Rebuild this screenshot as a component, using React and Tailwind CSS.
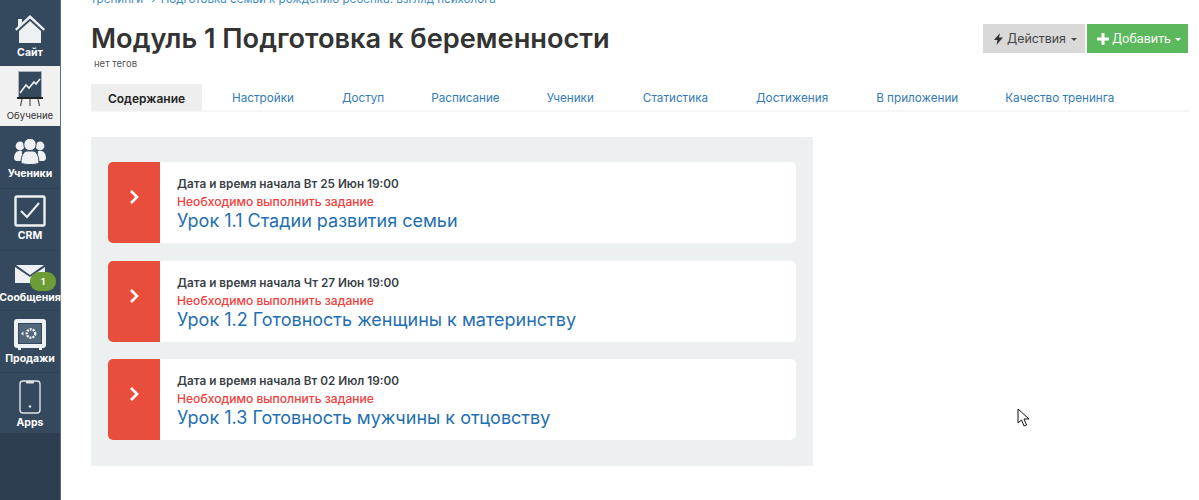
const F = { fontFamily: 'Inter, "Noto Sans", sans-serif' };

function Home() {
  return (
    <svg width="32" height="30" viewBox="0 0 32 30">
      <path d="M4 5h4v4L4 13z" fill="#eef1f3" />
      <path d="M16 1 1 15l1.5 1.8L16 4.5l13.5 12.3L31 15z" fill="#eef1f3" />
      <path d="M16 7 5 17v12h22V17z" fill="#eef1f3" />
    </svg>
  );
}
function Board() {
  return (
    <svg width="26" height="36" viewBox="0 0 26 36">
      <rect x="1.5" y="0.5" width="23" height="26" fill="#34495e" stroke="#aab4bd" strokeWidth="1" />
      <path d="M3 22 9 14l3 3 5-6 2 2 4-5" fill="none" stroke="#eef1f3" strokeWidth="1.6" />
      <rect x="0" y="26" width="26" height="2" fill="#222" />
      <path d="M5 28 3.5 35M13 28v7M21 28l1.5 7" stroke="#555" strokeWidth="1.2" />
    </svg>
  );
}
function People() {
  return (
    <svg width="32" height="27" viewBox="0 0 32 27" fill="#eef1f3">
      <circle cx="6" cy="8" r="4.4" />
      <circle cx="26" cy="8" r="4.4" />
      <path d="M0 21c0-5 2-8 5-8h3v10H2z" />
      <path d="M32 21c0-5-2-8-5-8h-3v10h6z" />
      <circle cx="16" cy="6.5" r="6.2" stroke="#34495e" strokeWidth="1" />
      <path d="M7 25c0-8 3-12 6-12h6c3 0 6 4 6 12-3 2-15 2-18 0z" stroke="#34495e" strokeWidth="1" />
    </svg>
  );
}
function Check() {
  return (
    <svg width="32" height="32" viewBox="0 0 32 32" fill="none">
      <rect x="1.5" y="1.5" width="29" height="29" rx="1.5" stroke="#eef1f3" strokeWidth="2.4" />
      <path d="m7 16 6 6L25 8" stroke="#eef1f3" strokeWidth="2" />
    </svg>
  );
}
function Mail() {
  return (
    <svg width="30" height="18" viewBox="0 0 30 18" fill="#eef1f3">
      <path d="M1 0h28L15 10z" />
      <path d="M0 2v16h30V2L15 12z" />
    </svg>
  );
}
function Safe() {
  return (
    <svg width="32" height="31" viewBox="0 0 32 31" fill="none">
      <rect x="1" y="1" width="30" height="27" rx="2" fill="#eef1f3" stroke="#eef1f3" strokeWidth="2" />
      <rect x="4.5" y="4.5" width="23" height="20" fill="#52677a" stroke="#34495e" />
      <circle cx="17" cy="14.5" r="4.2" stroke="#eef1f3" strokeWidth="2.4" strokeDasharray="2 1" />
      <path d="m7 14.5 2.5-2v4z" fill="#eef1f3" />
      <path d="M4 29h3v2H4zM25 29h3v2h-3z" fill="#eef1f3" />
    </svg>
  );
}
function Phone() {
  return (
    <svg width="22" height="34" viewBox="0 0 22 34" fill="none">
      <rect x="1" y="1" width="20" height="32" rx="3" stroke="#dfe4e8" strokeWidth="1.4" />
      <path d="M7 1h8v1.5a1 1 0 0 1-1 1H8a1 1 0 0 1-1-1z" fill="#dfe4e8" />
      <circle cx="11" cy="26.5" r="1.3" fill="#dfe4e8" />
    </svg>
  );
}

function NavItem({ h, icon, label, active, badge, bt }) {
  return (
    <div
      className={`relative flex flex-col items-center justify-end ${h} ${bt ? "border-t border-[#2f4356]" : ""} ${active ? "bg-[#f1f1f1]" : ""}`}
    >
      {icon}
      <span
        className={`mt-[2px] whitespace-nowrap leading-[13px] ${active ? "text-[9.6px] font-normal text-[#333]" : "text-[10.5px] font-bold text-white"}`}
      >
        {label}
      </span>
      {badge}
    </div>
  );
}

function Lesson({ date, title }) {
  return (
    <div className="flex h-[81px] overflow-hidden rounded-[5px] bg-white">
      <div className="flex w-[52px] shrink-0 items-center justify-center bg-[#e94e3d] pb-[11px]">
        <svg width="11" height="16" viewBox="0 0 11 16" fill="none">
          <path d="m2 2 6 6-6 6" stroke="#fff" strokeWidth="2.6" />
        </svg>
      </div>
      <div className="pl-[17px] pt-[14px]">
        <div className="text-[11.75px] font-semibold leading-[17px] text-[#3a3f47]">Дата и время начала {date}</div>
        <div className="text-[12.1px] font-medium leading-[17px] text-[#f0403c]">Необходимо выполнить задание</div>
        <div className="text-[18px] leading-[22px] text-[#1f6fb2]">{title}</div>
      </div>
    </div>
  );
}

const tabs = [
  ["Настройки", "ml-[30px]"],
  ["Доступ", "ml-[48px]"],
  ["Расписание", "ml-[47px]"],
  ["Ученики", "ml-[47px]"],
  ["Статистика", "ml-[49px]"],
  ["Достижения", "ml-[48px]"],
  ["В приложении", "ml-[48px]"],
  ["Качество тренинга", "ml-[47px]"],
];

export default function App() {
  return (
    <div className="relative flex h-[500px] w-[1199px] overflow-hidden bg-white" style={F}>
      <aside className="flex w-[61px] shrink-0 flex-col border-r border-[#5c6b78] bg-[#2c3e50]">
        <div className="bg-[#34495e]">
          <NavItem h="h-[66px] pb-[7px]" icon={<Home />} label="Сайт" />
          <NavItem h="h-[60px] pb-[4px]" icon={<Board />} label="Обучение" active />
          <NavItem h="h-[62px] pb-[8px]" icon={<People />} label="Ученики" />
          <NavItem h="h-[62px] pb-[8px]" bt icon={<Check />} label="CRM" />
          <NavItem
            h="h-[60px] pb-[6px]"
            bt
            icon={<span className="mb-[6px] block"><Mail /></span>}
            label="Сообщения"
            badge={
              <span className="absolute left-[30px] top-[21px] flex h-[19px] w-[26px] items-center justify-center rounded-[9px] bg-[#6c9c35] text-[9px] font-bold text-white">
                1
              </span>
            }
          />
          <NavItem h="h-[62px] pb-[7px]" bt icon={<Safe />} label="Продажи" />
          <NavItem h="h-[61px] pb-[4px]" bt icon={<Phone />} label="Apps" />
        </div>
      </aside>

      <main className="min-w-0 flex-1 pl-[30px] pr-[10px]">
        <div className="-mt-[8px] whitespace-nowrap text-[11.6px] leading-[14px] text-[#3e8ac4]">
          тренинги → Подготовка семьи к рождению ребенка: взгляд психолога
        </div>

        <div className="mt-[14px] flex items-start justify-between">
          <div>
            <h1 className="-mt-[1px] whitespace-nowrap text-[27.2px] font-semibold leading-[40px] text-[#333]">Модуль 1 Подготовка к беременности</h1>
            <div className="-mt-[1px] pl-[3px] text-[9.5px] leading-[12px] text-[#555]">нет тегов</div>
          </div>
          <div className="mr-[1px] mt-[4px] flex gap-[2px]">
            <button className="flex h-[29px] w-[102px] items-center justify-center gap-[4px] bg-[#d9d9d9] pl-[3px] pt-[1px] text-[12.4px] text-[#444]">
              <svg width="9" height="12" viewBox="0 0 9 12" fill="#333"><path d="M6 0 0 7h3.5L2.5 12 9 4.5H5z" /></svg>
              Действия
              <span className="ml-[1px] border-x-[3px] border-t-[3px] border-x-transparent border-t-[#444]" />
            </button>
            <button className="flex h-[29px] w-[101px] items-center justify-center gap-[3px] bg-[#5cb85c] pl-[3px] pt-[1px] text-[12.4px] text-white">
              <svg width="12" height="12" viewBox="0 0 12 12" fill="#fff"><path d="M4.5 0h3v4.5H12v3H7.5V12h-3V7.5H0v-3h4.5z" /></svg>
              Добавить
              <span className="ml-[1px] border-x-[3px] border-t-[3px] border-x-transparent border-t-white" />
            </button>
          </div>
        </div>

        <nav className="mt-[14px] flex h-[28px] items-center border-b-2 border-[#f5f5f5] text-[11.7px]">
          <div className="flex h-[27px] w-[111px] items-center justify-center bg-[#eeeeee] pt-[3px] text-[12px] font-semibold text-[#222]">Содержание</div>
          {tabs.map(([t, m]) => (
            <span key={t} className={`${m} whitespace-nowrap pt-[3px] text-[#337ab7]`}>{t}</span>
          ))}
        </nav>

        <section className="mt-[25px] flex h-[329px] w-[722px] flex-col gap-[17.5px] bg-[#ecf0f1] px-[17px] pt-[25px]">
          <Lesson date="Вт 25 Июн 19:00" title="Урок 1.1 Стадии развития семьи" />
          <Lesson date="Чт 27 Июн 19:00" title="Урок 1.2 Готовность женщины к материнству" />
          <Lesson date="Вт 02 Июл 19:00" title="Урок 1.3 Готовность мужчины к отцовству" />
        </section>
      </main>

      <svg className="absolute left-[1017px] top-[408px]" width="13" height="20" viewBox="0 0 13 20">
        <path d="M1 1v14l3.5-3 2.5 6 2.5-1-2.5-6H12z" fill="#fff" stroke="#111" strokeWidth="1" />
      </svg>
    </div>
  );
}
